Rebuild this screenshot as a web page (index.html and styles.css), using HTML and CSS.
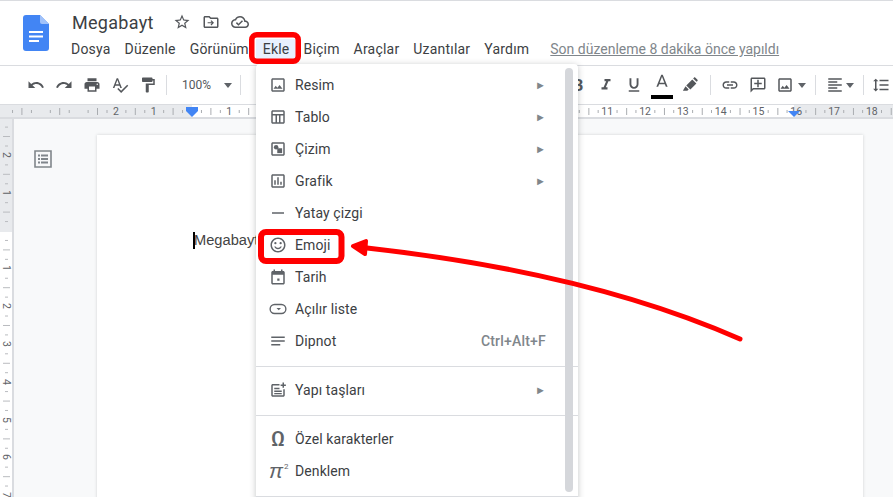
FILE: index.html
```html
<!DOCTYPE html>
<html lang="tr">
<head>
<meta charset="utf-8">
<title>Megabayt</title>
<link rel="stylesheet" href="styles.css">
</head>
<body>
<header class="header">
  <svg class="logo" viewBox="0 0 26 36"><path fill="#4285f4" d="M3 0h14l9 9v24a3 3 0 0 1-3 3H3a3 3 0 0 1-3-3V3a3 3 0 0 1 3-3z"/><path fill="#a1c2fa" d="M17 0l9 9h-7a2 2 0 0 1-2-2z"/><path fill="#fff" d="M6 16h14v2H6zM6 20.500h14v2H6zM6 25h10v2H6z"/></svg>
  <div class="titles">
    <div class="title-row">
      <span class="doc-title">Megabayt</span>
      <svg class="hicon star" viewBox="0 0 24 24"><path d="M22 9.240l-7.190-.620L12 2 9.190 8.630 2 9.240l5.460 4.730L5.820 21 12 17.270 18.180 21l-1.630-7.030L22 9.240zM12 15.400l-3.760 2.270 1-4.280-3.320-2.880 4.380-.380L12 6.100l1.710 4.040 4.380.380-3.320 2.880 1 4.280L12 15.400z"/></svg>
      <svg class="hicon" viewBox="0 0 24 24"><path d="M20 6h-8l-2-2H4c-1.100 0-2 .900-2 2v12c0 1.100.900 2 2 2h16c1.100 0 2-.900 2-2V8c0-1.100-.900-2-2-2zm0 12H4V6h5.170l2 2H20v10z"/><path d="M12.500 9.500l-1.100 1.100 1.600 1.600H7.500v1.600H13l-1.600 1.600 1.100 1.100 3.500-3.500z"/></svg>
      <svg class="hicon" viewBox="0 0 24 24"><path d="M19.350 10.040C18.670 6.590 15.640 4 12 4 9.110 4 6.600 5.640 5.350 8.040 2.340 8.360 0 10.910 0 14c0 3.310 2.690 6 6 6h13c2.760 0 5-2.240 5-5 0-2.640-2.050-4.780-4.650-4.960zM19 18H6c-2.210 0-4-1.790-4-4 0-2.050 1.530-3.760 3.560-3.970l1.070-.110.500-.950C8.080 7.140 9.940 6 12 6c2.620 0 4.880 1.860 5.390 4.430l.300 1.500 1.530.110c1.560.100 2.780 1.410 2.780 2.960 0 1.650-1.350 3-3 3zm-9-3.820l-2.090-2.090L6.500 13.500 10 17l6.010-6.010-1.410-1.410z"/></svg>
    </div>
    <nav class="menubar">
      <span class="mitem">Dosya</span>
      <span class="mitem">Düzenle</span>
      <span class="mitem">Görünüm</span>
      <span class="mitem active">Ekle</span>
      <span class="mitem">Biçim</span>
      <span class="mitem">Araçlar</span>
      <span class="mitem">Uzantılar</span>
      <span class="mitem">Yardım</span>
      <a class="last-edit">Son düzenleme 8 dakika önce yapıldı</a>
    </nav>
  </div>
</header>

<div class="toolbar">
  <span class="tbtn"><svg viewBox="0 0 24 24"><path d="M12.500 8c-2.650 0-5.050.990-6.900 2.600L2 7v9h9l-3.620-3.620c1.390-1.160 3.160-1.880 5.120-1.880 3.540 0 6.550 2.310 7.600 5.500l2.370-.780C21.080 11.030 17.150 8 12.500 8z"/></svg></span>
  <span class="tbtn"><svg viewBox="0 0 24 24"><path d="M18.400 10.600C16.550 8.990 14.150 8 11.500 8c-4.650 0-8.580 3.030-9.960 7.220L3.900 16c1.050-3.190 4.050-5.500 7.600-5.500 1.950 0 3.730.720 5.120 1.880L13 16h9V7l-3.600 3.600z"/></svg></span>
  <span class="tbtn"><svg viewBox="0 0 24 24"><path d="M19 8H5c-1.660 0-3 1.340-3 3v6h4v4h12v-4h4v-6c0-1.660-1.340-3-3-3zm-3 11H8v-5h8v5zm3-7c-.550 0-1-.450-1-1s.450-1 1-1 1 .450 1 1-.450 1-1 1zm-1-9H6v4h12V3z"/></svg></span>
  <span class="tbtn"><svg viewBox="0 0 24 24"><path d="M12.450 16h2.090L9.430 3H7.570L2.460 16h2.090l1.120-3h5.640l1.140 3zm-6.020-5L8.500 5.480 10.570 11H6.430zm15.160.590l-8.090 8.090L9.830 16l-1.410 1.410 5.090 5.090L23 13l-1.410-1.410z"/></svg></span>
  <span class="tbtn"><svg viewBox="0 0 24 24"><path d="M18 4V3c0-.550-.450-1-1-1H5c-.550 0-1 .450-1 1v4c0 .550.450 1 1 1h12c.550 0 1-.450 1-1V6h1v4H9v11c0 .550.450 1 1 1h2c.550 0 1-.450 1-1v-9h8V4h-3z"/></svg></span>
  <span class="tsep first"></span>
  <span class="zoom">100%</span>
  <span class="caret zoom-caret"></span>
  <span class="tsep zoom-sep"></span>
  <span class="tspacer"></span>
  <span class="tbtn bold">B</span>
  <span class="tbtn"><svg viewBox="0 0 24 24"><path d="M10 4v3h2.210l-3.420 8H6v3h8v-3h-2.210l3.420-8H18V4z"/></svg></span>
  <span class="tbtn"><svg viewBox="0 0 24 24"><path d="M12 17c3.310 0 6-2.690 6-6V3h-2.500v8c0 1.930-1.570 3.500-3.500 3.500S8.500 12.930 8.500 11V3H6v8c0 3.310 2.690 6 6 6zm-7 2v2h14v-2H5z"/></svg></span>
  <span class="tbtn color"><svg viewBox="0 0 24 24"><path d="M11 1L4.500 17h2.400l1.300-3.500h7.600l1.300 3.500h2.400L13 1h-2zm-2.100 10.500L12 3.800l3.100 7.700H8.900z"/></svg><i class="colorbar"></i></span>
  <span class="tbtn"><svg viewBox="0 0 24 24"><path d="M15 4.500l5.500 5.500-8 8L7 12.500zM16.200 3.300l1.300-1.300c.400-.400 1-.400 1.400 0l3.100 3.100c.400.400.400 1 0 1.400l-1.300 1.300zM6 13.800l4.200 4.200-1.800 1.800H2.500z"/></svg></span>
  <span class="tsep after-color"></span>
  <span class="tbtn"><svg viewBox="0 0 24 24"><path d="M3.900 12c0-1.710 1.390-3.100 3.100-3.100h4V7H7c-2.760 0-5 2.240-5 5s2.240 5 5 5h4v-1.900H7c-1.710 0-3.100-1.390-3.100-3.100zM8 13h8v-2H8v2zm9-6h-4v1.900h4c1.710 0 3.100 1.390 3.100 3.100s-1.390 3.100-3.100 3.100h-4V17h4c2.760 0 5-2.240 5-5s-2.240-5-5-5z"/></svg></span>
  <span class="tbtn"><svg viewBox="0 0 24 24"><path d="M20 2H4c-1.100 0-2 .900-2 2v18l4-4h14c1.100 0 2-.900 2-2V4c0-1.100-.900-2-2-2zm0 14H5.170L4 17.170V4h16v12z"/><path d="M11 5h2v4h4v2h-4v4h-2v-4H7V9h4z"/></svg></span>
  <span class="tbtn img"><svg viewBox="0 0 24 24"><path d="M19 5v14H5V5h14m0-2H5c-1.100 0-2 .900-2 2v14c0 1.100.900 2 2 2h14c1.100 0 2-.900 2-2V5c0-1.100-.900-2-2-2z"/><path d="M14.140 11.860l-3 3.870L9 13.140 6 17h12z"/></svg></span>
  <span class="caret"></span>
  <span class="tsep after-image"></span>
  <span class="tbtn narrow"><svg viewBox="0 0 24 24"><path d="M15 15H3v2h12v-2zm0-8H3v2h12V7zM3 13h18v-2H3v2zm0 8h18v-2H3v2zM3 3v2h18V3H3z"/></svg></span>
  <span class="caret"></span>
  <span class="tsep after-align"></span>
  <span class="tbtn"><svg viewBox="0 0 24 24"><path d="M6 7h2.500L5 3.500 1.500 7H4v10H1.500L5 20.500 8.500 17H6V7zm4-2v2h12V5H10zm0 14h12v-2H10v2zm0-6h12v-2H10v2z"/></svg></span>
</div>

<div class="hruler">
  <div class="hr-paper"></div>
  <div class="hr-marks">
    <span>2</span><span>1</span><span></span><span>1</span><span></span><span></span><span></span><span></span><span></span><span></span><span></span><span></span><span></span><span>11</span><span>12</span><span>13</span><span>14</span><span>15</span><span>16</span><span>17</span><span>18</span>
  </div>
  <i class="indent-top"></i>
  <i class="indent-tri left"></i>
  <i class="indent-tri right"></i>
</div>

<main class="workspace">
  <div class="vruler">
    <span>2</span><span>1</span><span></span><span>1</span><span>2</span><span>3</span><span>4</span><span>5</span><span>6</span><span>7</span>
  </div>
  <div class="canvas">
    <div class="outline">
      <svg viewBox="0 0 18 18"><path d="M1 1h16v16H1z" fill="none" stroke="#80868b" stroke-width="1.600"/><path fill="#80868b" d="M4 4.500h2v2H4zM7 4.500h7v2H7zM4 8h2v2H4zM7 8h7v2H7zM4 11.500h2v2H4zM7 11.500h7v2H7z"/></svg>
    </div>
    <div class="page"><span class="caret-line"></span>Megabayt</div>
  </div>
</main>

<div class="insert-menu">
  <div class="row"><svg viewBox="0 0 24 24"><path d="M19 5v14H5V5h14m0-2H5c-1.100 0-2 .900-2 2v14c0 1.100.900 2 2 2h14c1.100 0 2-.900 2-2V5c0-1.100-.900-2-2-2z"/><path d="M14.140 11.860l-3 3.870L9 13.140 6 17h12z"/></svg><span class="label">Resim</span><span class="sub">►</span></div>
  <div class="row"><svg viewBox="0 0 24 24"><path d="M19 3H5c-1.100 0-2 .900-2 2v14c0 1.100.900 2 2 2h14c1.100 0 2-.900 2-2V5c0-1.100-.900-2-2-2zm0 2v3H5V5h14zM5 19v-9h3.670v9H5zm5.670 0v-9h2.670v9h-2.670zm4.660 0v-9H19v9h-3.670z"/></svg><span class="label">Tablo</span><span class="sub">►</span></div>
  <div class="row"><svg viewBox="0 0 24 24"><path d="M19 5v14H5V5h14m0-2H5c-1.100 0-2 .900-2 2v14c0 1.100.900 2 2 2h14c1.100 0 2-.900 2-2V5c0-1.100-.900-2-2-2z"/><circle cx="9.500" cy="9.500" r="3"/><path d="M11 11h6.500v6.500H11z"/></svg><span class="label">Çizim</span><span class="sub">►</span></div>
  <div class="row"><svg viewBox="0 0 24 24"><path d="M19 5v14H5V5h14m0-2H5c-1.100 0-2 .900-2 2v14c0 1.100.900 2 2 2h14c1.100 0 2-.900 2-2V5c0-1.100-.900-2-2-2z"/><path d="M7 11h2v6H7zM11 7h2v10h-2zM15 13h2v4h-2z"/></svg><span class="label">Grafik</span><span class="sub">►</span></div>
  <div class="row"><svg viewBox="0 0 24 24"><path d="M4 11h16v2H4z"/></svg><span class="label">Yatay çizgi</span></div>
  <div class="row"><svg viewBox="0 0 24 24"><path d="M12 2C6.470 2 2 6.480 2 12s4.470 10 10 10 10-4.480 10-10S17.520 2 12 2zm0 18c-4.420 0-8-3.580-8-8s3.580-8 8-8 8 3.580 8 8-3.580 8-8 8z"/><circle cx="8.500" cy="9.500" r="1.500"/><circle cx="15.500" cy="9.500" r="1.500"/><path d="M12 17.500c2.330 0 4.300-1.460 5.100-3.500h-1.900c-.700 1.200-1.800 1.800-3.200 1.800s-2.500-.600-3.200-1.800H6.900c.800 2.040 2.770 3.500 5.100 3.500z"/></svg><span class="label">Emoji</span></div>
  <div class="row"><svg viewBox="0 0 24 24"><path d="M19 4h-1V2h-2v2H8V2H6v2H5c-1.100 0-2 .900-2 2v14c0 1.100.900 2 2 2h14c1.100 0 2-.900 2-2V6c0-1.100-.900-2-2-2zm0 16H5V9h14v11z"/><path d="M11 14h3v3h-3z"/></svg><span class="label">Tarih</span></div>
  <div class="row"><svg viewBox="0 0 24 24"><rect x="1.500" y="6" width="21" height="12" rx="6" fill="none" stroke="#5f6368" stroke-width="1.800"/><path d="M10 10.500h6l-3 3z"/></svg><span class="label">Açılır liste</span></div>
  <div class="row"><svg viewBox="0 0 24 24"><path d="M3 6h18v2H3zM3 11h18v2H3zM3 16h12v2H3z"/></svg><span class="label">Dipnot</span><span class="shortcut">Ctrl+Alt+F</span></div>
  <hr class="sep">
  <div class="row"><svg viewBox="0 0 24 24"><path d="M14 4H5c-1.100 0-2 .900-2 2v13c0 1.100.900 2 2 2h14c1.100 0 2-.900 2-2v-8h-2v8H5V6h9z"/><path d="M7 9h7v2H7zM7 12.500h10v2H7zM7 16h10v1.600H7zM18 2h2v2.500h2.500v2H20V9h-2V6.500h-2.500v-2H18z"/></svg><span class="label">Yapı taşları</span><span class="sub">►</span></div>
  <hr class="sep">
  <div class="row"><span class="glyph omega">Ω</span><span class="label">Özel karakterler</span></div>
  <div class="row"><span class="glyph pi">π<sup>2</sup></span><span class="label">Denklem</span></div>
  <hr class="sep">
  <div class="scrollbar"></div>
</div>

<svg class="annotations" viewBox="0 0 893 497">
  <rect class="frame frame-menu" x="251.750" y="34.750" width="46.500" height="26.500" rx="5"/>
  <rect class="frame" x="261" y="232" width="80.500" height="29" rx="5"/>
  <path class="mark" d="M740 339C640 295 520 265 367 248"/>
  <path class="mark-head" d="M353 246L366 241L365 254Z"/>
</svg>
</body>
</html>
```
FILE: styles.css
```css
* { box-sizing: border-box; }
html, body { margin: 0; height: 100%; }
body {
  position: relative;
  display: flex;
  flex-direction: column;
  height: 497px;
  overflow: hidden;
  background: #f8f9fa;
  font-family: Roboto, "Liberation Sans", sans-serif;
  color: #3c4043;
}

/* Header */
.header {
  flex: none;
  height: 66px;
  display: flex;
  background: #fff;
  border-top: 1px solid #dadce0;
  border-bottom: 1px solid #dadce0;
  padding: 14px 0 0 23px;
}
.logo { width: 26px; height: 36px; flex: none; }
.titles { margin-left: 15px; margin-top: -4px; flex: 1; min-width: 0; }
.title-row { display: flex; align-items: center; height: 22px; margin-left: 8px; }
.doc-title { font-size: 18px; letter-spacing: .3px; color: #3c4043; margin-right: 19px; }
.hicon { width: 18px; height: 18px; fill: #54575b; margin-right: 11px; flex: none; }
.menubar { display: flex; align-items: center; height: 20px; margin-top: 6px; font-size: 14px; letter-spacing: .2px; }
.mitem { padding: 0 7px; height: 20px; line-height: 20px; white-space: nowrap; }
.mitem.active { background: #e8f0fe; }
.last-edit { margin-left: 14px; color: #80868b; text-decoration: underline; white-space: nowrap; letter-spacing: 0; }

/* Toolbar */
.toolbar {
  flex: none;
  height: 38px;
  display: flex;
  align-items: center;
  background: #fff;
  padding-left: 22px;
  white-space: nowrap;
}
.tbtn {
  position: relative;
  flex: none;
  width: 28px;
  height: 28px;
  display: flex;
  align-items: center;
  justify-content: center;
}
.tbtn.narrow { width: 22px; }
.tbtn.img { width: 26px; }
.tbtn svg { width: 18px; height: 18px; fill: #54575b; }
.bold { font-size: 17px; font-weight: 700; color: #54575b; }
.colorbar { position: absolute; left: 3px; right: 3px; bottom: 0; height: 4px; background: #000; }
.color svg { margin-top: -5px; }
.tsep { flex: none; width: 1px; height: 20px; background: #dadce0; }
.tsep.first { margin-left: 4px; }
.zoom { margin-left: 15px; font-size: 12px; color: #54575b; }
.caret { flex: none; width: 0; height: 0; border: 4px solid transparent; border-top: 5px solid #5f6368; border-bottom: 0; }
.zoom-caret { margin-left: 13px; }
.zoom-sep { margin-left: 8px; }
.tspacer { flex: none; width: 323px; }
.after-color { margin: 0 5px 0 6px; }
.after-image { margin-left: 9px; }
.after-align { margin-left: 9px; }
.after-image + .tbtn { margin-left: 8px; }
.after-align + .tbtn { margin-left: 3px; }

/* Horizontal ruler */
.hruler {
  position: relative;
  flex: none;
  height: 15px;
  background: #e8eaed;
  border-top: 1px solid #dadce0;
  border-bottom: 2px solid #dadce0;
  overflow: hidden;
}
.hr-paper { position: absolute; left: 192px; width: 602px; top: 0; bottom: 0; background: #fff; }
.hr-marks {
  position: relative;
  display: flex;
  height: 100%;
  padding-left: 97px;
  font-size: 10.500px;
  color: #5f6368;
  background-image:
    linear-gradient(90deg, #a9acb0 1px, transparent 1px),
    linear-gradient(90deg, #a9acb0 1px, transparent 1px);
  background-repeat: repeat-x;
  background-size: 37.800px 7px, 18.900px 3px;
  background-position: 97px 3px, 106.500px 5px;
}
.hr-marks span { flex: none; width: 37.800px; line-height: 13px; text-align: center; }
.indent-top { position: absolute; left: 186px; top: 2px; width: 12px; height: 4px; background: #4285f4; }
.indent-tri { position: absolute; top: 6px; width: 0; height: 0; border: 6px solid transparent; border-top: 6px solid #4285f4; border-bottom: 0; }
.indent-tri.left { left: 186px; }
.indent-tri.right { left: 788px; }

/* Workspace */
.workspace { flex: 1; min-height: 0; display: flex; }
.vruler {
  flex: none;
  width: 14px;
  border-right: 2px solid #dadce0;
  padding-top: 17px;
  font-size: 10.500px;
  color: #5f6368;
  overflow: hidden;
  background-color: #fff;
  background-image:
    linear-gradient(#b9bbbf 1px, transparent 1px),
    linear-gradient(#b9bbbf 1px, transparent 1px),
    linear-gradient(#e8eaed, #e8eaed);
  background-repeat: repeat-y, repeat-y, no-repeat;
  background-size: 7px 37.800px, 3px 18.900px, 100% 113px;
  background-position: 3px 17px, 5px 26.500px, 0 0;
}
.vruler span {
  display: flex;
  align-items: center;
  justify-content: center;
  height: 37.800px;
  writing-mode: vertical-rl;
}
.canvas { flex: 1; min-width: 0; display: flex; padding-top: 16px; overflow: hidden; }
.outline { flex: none; width: 83px; padding-left: 20px; }
.outline svg { display: block; width: 18px; height: 18px; margin-top: 15px; }
.page {
  flex: none;
  width: 766px;
  height: 700px;
  padding: 97px 0 0 97px;
  background: #fff;
  box-shadow: 0 0 3px rgba(60, 64, 67, .2);
  font-family: "Liberation Sans", Arial, sans-serif;
  font-size: 14.670px;
  line-height: 17px;
  color: #444;
  position: relative;
  white-space: nowrap;
}
.caret-line { position: absolute; left: 96px; top: 97px; width: 2px; height: 17px; background: #000; }

/* Insert menu */
.insert-menu {
  position: absolute;
  left: 256px;
  top: 64px;
  width: 322px;
  height: 440px;
  padding-top: 5px;
  background: #fff;
  border-radius: 4px 4px 0 0;
  box-shadow: 0 1px 6px rgba(60, 64, 67, .3);
  font-size: 14px;
  letter-spacing: .1px;
  color: #3c4043;
}
.row { display: flex; align-items: center; height: 32px; padding: 0 32px 0 13px; }
.row svg { flex: none; width: 18px; height: 18px; fill: #5f6368; }
.label { margin-left: 8px; flex: 1; white-space: nowrap; }
.sub { font-size: 11px; color: #80868b; letter-spacing: 0; }
.shortcut { color: #80868b; font-weight: 500; font-size: 14px; letter-spacing: .2px; }
.sep { height: 1px; margin: 9px 0 7px; border: 0; background: #dadce0; }
.glyph { flex: none; width: 18px; color: #5f6368; text-align: center; line-height: 18px; }
.omega { font-size: 21px; font-weight: 500; font-family: Roboto, sans-serif; }
.pi { font-size: 21px; font-weight: 400; font-style: italic; white-space: nowrap; letter-spacing: 0; text-align: left; font-family: "Liberation Sans", sans-serif; }
.pi sup { font-size: 8px; font-weight: 400; font-style: normal; font-family: Roboto, sans-serif; vertical-align: 9px; line-height: 0; margin-left: 1px; }
.scrollbar { position: absolute; left: 309px; top: 4px; width: 8px; height: 424px; border-radius: 4px; background: #d5d7db; }

/* Red annotations */
.annotations { position: absolute; left: 0; top: 0; width: 893px; height: 497px; pointer-events: none; }
.frame { fill: none; stroke: #ff0000; stroke-width: 6; }
.frame-menu { stroke-width: 5.500; }
.mark { fill: none; stroke: #ff0000; stroke-width: 5; stroke-linecap: round; }
.mark-head { fill: #ff0000; stroke: #ff0000; stroke-width: 4; stroke-linejoin: round; }
```
